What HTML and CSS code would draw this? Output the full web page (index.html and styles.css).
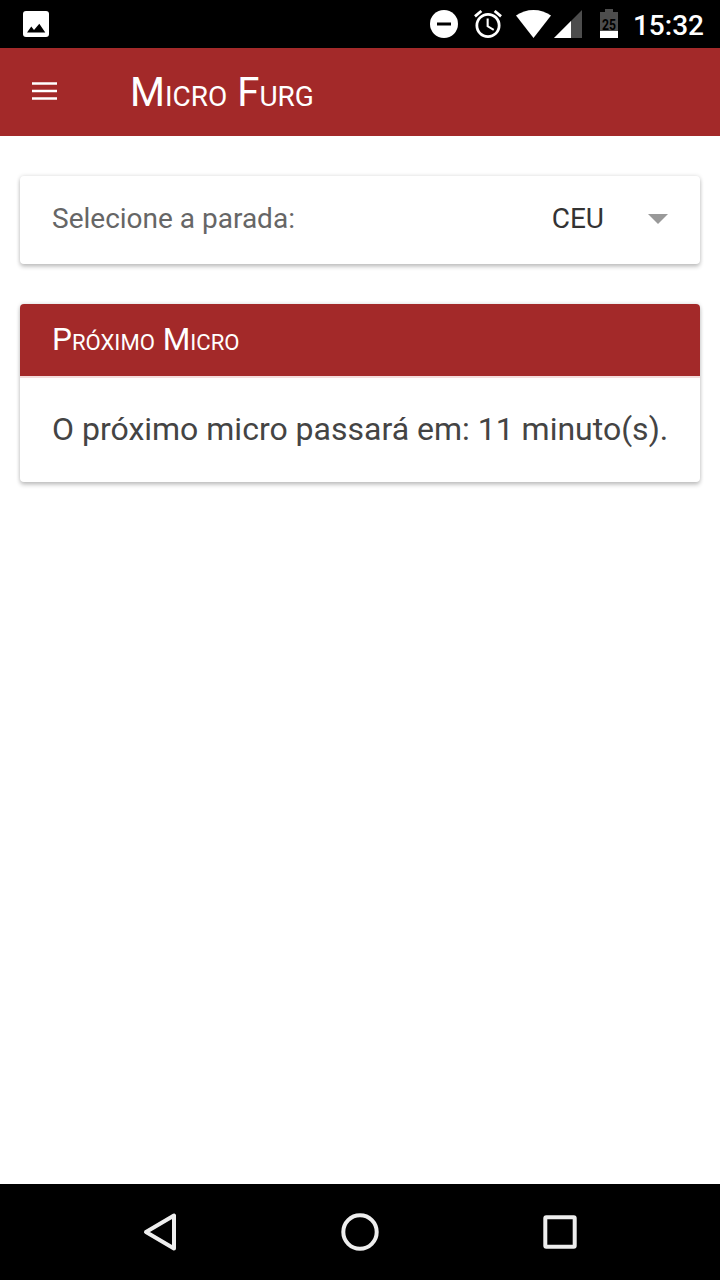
FILE: index.html
```html
<!DOCTYPE html>
<html lang="pt-BR">
<head>
    <meta charset="UTF-8">
    <meta name="viewport" content="width=device-width, initial-scale=1.0">
    <title>Micro Furg</title>
    <link rel="stylesheet" href="styles.css">
</head>
<body>

    <!-- Status bar -->
    <div class="statusbar">
        <svg class="photo" width="26" height="26" viewBox="0 0 26 26">
            <rect width="26" height="26" rx="3" fill="#fff"/>
            <path d="M4 21.500L8.300 15.500L11 19L16.300 12.800L22.300 21.500Z" fill="#000"/>
        </svg>
        <div class="status-icons">
            <svg class="dnd" width="28" height="28" viewBox="0 0 28 28">
                <circle cx="14" cy="14" r="14" fill="#fff"/>
                <rect x="7" y="12.500" width="14" height="3" fill="#000"/>
            </svg>
            <svg class="alarm" width="28" height="28" viewBox="2 1.900 20 20.100">
                <path fill="#fff" d="M22 5.720l-4.600-3.860-1.290 1.530 4.600 3.860L22 5.720zM7.880 3.390L6.600 1.860 2 5.710l1.290 1.530 4.590-3.850zM12.500 8H11v6l4.750 2.850.75-1.230-4-2.370V8zM12 4c-4.970 0-9 4.030-9 9s4.020 9 9 9a9 9 0 0 0 0-18zm0 16c-3.870 0-7-3.130-7-7s3.130-7 7-7 7 3.130 7 7-3.130 7-7 7z"/>
            </svg>
            <svg class="wifi" width="35" height="28" viewBox="0 0 35 28">
                <path d="M17.500 28L0 5.500C5 2 11 0 17.500 0S30 2 35 5.500Z" fill="#fff"/>
            </svg>
            <svg class="signal" width="28" height="28" viewBox="0 0 28 28">
                <path d="M0 28L28 0V28Z" fill="#4d4d4d"/>
                <path d="M0 28L17 11V28Z" fill="#fff"/>
            </svg>
            <svg class="battery" width="18" height="30" viewBox="0 0 18 30">
                <path d="M0 3H5V0H13V3H18V22H0Z" fill="#4d4d4d"/>
                <rect y="22" width="18" height="7" fill="#fff"/>
                <text class="battery-text" x="2" y="21" textLength="14" lengthAdjust="spacingAndGlyphs">25</text>
            </svg>
            <span class="clock">15:32</span>
        </div>
    </div>

    <!-- Header -->
    <div class="toolbar">
        <svg class="menu" width="25" height="18" viewBox="0 0 25 18">
            <path d="M0 1.500H25M0 9H25M0 16.500H25" stroke="#fff" stroke-width="2.700"/>
        </svg>
        <h1><span class="word">Micro</span> <span class="word">Furg</span></h1>
    </div>

    <!-- Main container -->
    <div class="content">
        <div class="card select-card">
            <span class="select-label">Selecione a parada:</span>
            <span class="select-value">CEU</span>
            <span class="select-arrow"></span>
        </div>

        <div class="card">
            <h2><span class="word">Próximo</span> <span class="word">Micro</span></h2>
            <p>O próximo micro passará em: 11 minuto(s).</p>
        </div>
    </div>

    <!-- Android buttons -->
    <div class="navbar">
        <svg width="40" height="40" viewBox="0 0 40 40">
            <path d="M34 3.500V36.500L6 20Z"/>
        </svg>
        <svg width="40" height="40" viewBox="0 0 40 40">
            <circle cx="20" cy="20" r="16.700"/>
        </svg>
        <svg width="40" height="40" viewBox="0 0 40 40">
            <rect x="5.300" y="5.300" width="29.400" height="29.400" rx="1"/>
        </svg>
    </div>

</body>
</html>
```
FILE: styles.css
```css
* {
    box-sizing: border-box;
}

body {
    display: flex;
    flex-direction: column;
    height: 1280px;
    margin: 0;
    background-color: #fff;
    font-family: Roboto, sans-serif;
}

.statusbar {
    display: flex;
    align-items: center;
    justify-content: space-between;
    height: 48px;
    padding: 0 16px 0 23px;
    background-color: #000;
    color: #fff;
}

.status-icons {
    display: flex;
    align-items: center;
}

.alarm {
    margin-left: 16px;
}

.wifi {
    margin-left: 14px;
}

.signal {
    margin-left: 3px;
}

.battery {
    margin-left: 18px;
}

.battery-text {
    font-size: 14px;
    font-weight: 700;
    fill: #000;
}

.clock {
    margin-left: 15px;
    padding-top: 4px;
    font-size: 28px;
    font-weight: 500;
    line-height: 44px;
}

.toolbar {
    display: flex;
    align-items: center;
    height: 88px;
    padding-left: 32px;
    background-color: #a32929;
    color: #fff;
}

.menu {
    margin-bottom: 2px;
}

h1,
h2 {
    font-weight: 400;
    text-transform: uppercase;
}

h1 {
    margin: 0 0 0 73px;
    font-size: 28px;
    word-spacing: 3px;
}

/* capitals are larger than the rest of the word */
.word {
    display: inline-block;
    word-spacing: 0;
}

.word::first-letter {
    font-size: 1.43em;
}

.content {
    flex: 1;
    padding: 40px 20px;
}

.card {
    margin-bottom: 40px;
    border-radius: 4px;
    overflow: hidden;
    background-color: #fff;
    box-shadow: 0 3px 4px rgba(0, 0, 0, 0.2), 0 0 4px rgba(0, 0, 0, 0.14);
}

.select-card {
    display: flex;
    align-items: center;
    height: 88px;
    padding: 0 32px 3px;
    font-size: 28px;
}

.select-label {
    flex: 1;
    color: #666;
}

.select-value {
    color: #333;
}

.select-arrow {
    margin-left: 44px;
    border: 10px solid transparent;
    border-top-color: #999;
    border-bottom: none;
}

h2 {
    height: 74px;
    margin: 0;
    padding: 0 32px;
    border-bottom: 2px solid #f3dcdc;
    background-color: #a32929;
    color: #fff;
    font-size: 22.1px;
    line-height: 72px;
    word-spacing: 2.400px;
}

p {
    height: 104px;
    margin: 0;
    padding: 0 32px;
    color: #444;
    font-size: 32px;
    line-height: 102px;
    white-space: nowrap;
}

.navbar {
    display: flex;
    justify-content: space-between;
    align-items: center;
    height: 96px;
    padding: 0 140px;
    background-color: #000;
}

.navbar svg {
    fill: none;
    stroke: #eee;
    stroke-width: 4;
    stroke-linejoin: round;
}
```
